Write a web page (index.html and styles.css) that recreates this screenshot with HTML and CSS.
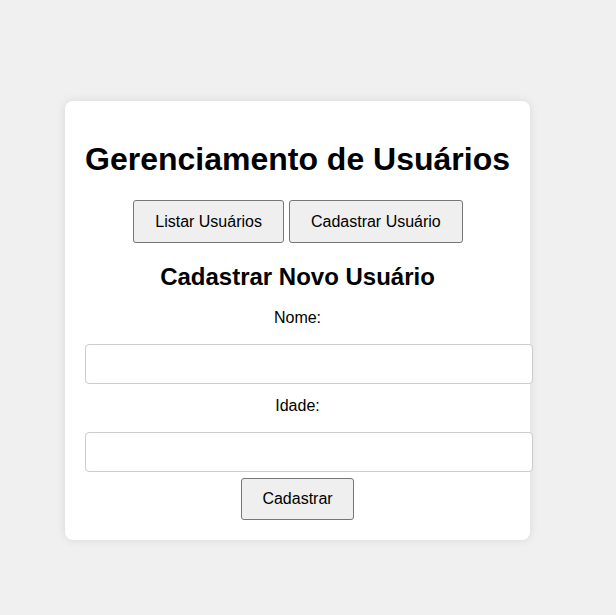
FILE: index.html
```html
<!DOCTYPE html>
<html lang="pt-BR">
<head>
<meta charset="utf-8">
<title>Gerenciamento de Usuários</title>
<link rel="stylesheet" href="styles.css">
</head>
<body>
  <div class="container">
    <h1 class="title">Gerenciamento de Usuários</h1>
    <div class="actions">
      <button class="btn" type="button">Listar Usuários</button>
      <button class="btn" type="button">Cadastrar Usuário</button>
    </div>
    <h2 class="subtitle">Cadastrar Novo Usuário</h2>
    <form class="form">
      <label class="label label-first" for="nome">Nome:</label>
      <input class="field" id="nome" type="text">
      <label class="label" for="idade">Idade:</label>
      <input class="field" id="idade" type="number">
      <button class="btn btn-submit" type="submit">Cadastrar</button>
    </form>
  </div>
</body>
</html>
```

FILE: styles.css
```css
html, body {
  margin: 0;
  padding: 0;
}

body {
  background: #f0f0f0;
  font-family: "Liberation Sans", Arial, sans-serif;
  color: #000;
  min-height: 615px;
  overflow: hidden;
}

.container {
  box-sizing: border-box;
  width: 465px;
  margin: 101px 0 0 65px;
  padding: 20px;
  background: #fff;
  border-radius: 8px;
  box-shadow: 0 0 10px rgba(0, 0, 0, 0.1);
  text-align: center;
}

.title {
  display: flex;
  justify-content: center;
  margin: 20px -10px 0;
  font-size: 32px;
  font-weight: bold;
  line-height: 37px;
  white-space: nowrap;
}

.actions {
  display: flex;
  justify-content: center;
  gap: 5px;
  margin-top: 22px;
  padding-left: 1px;
}

.btn {
  box-sizing: border-box;
  height: 43px;
  padding: 0 21px;
  background: #efefef;
  border: 1px solid #767676;
  border-radius: 3px;
  font-family: "Liberation Sans", Arial, sans-serif;
  font-size: 16px;
  color: #000;
}

.subtitle {
  margin: 20px 0 0;
  font-size: 24px;
  font-weight: bold;
  line-height: 28px;
}

.form {
  display: block;
}

.label {
  display: block;
  margin-top: 13px;
  font-size: 16px;
  line-height: 18px;
}

.label-first {
  margin-top: 18px;
}

.field {
  display: block;
  box-sizing: border-box;
  width: 448px;
  height: 40px;
  margin-top: 17px;
  padding: 10px;
  border: 1px solid #ccc;
  border-radius: 4px;
  background: #fff;
  font-family: "Liberation Sans", Arial, sans-serif;
  font-size: 16px;
}

.btn-submit {
  display: block;
  height: 42px;
  padding: 0 20px;
  margin: 6px auto 0;
}
```
